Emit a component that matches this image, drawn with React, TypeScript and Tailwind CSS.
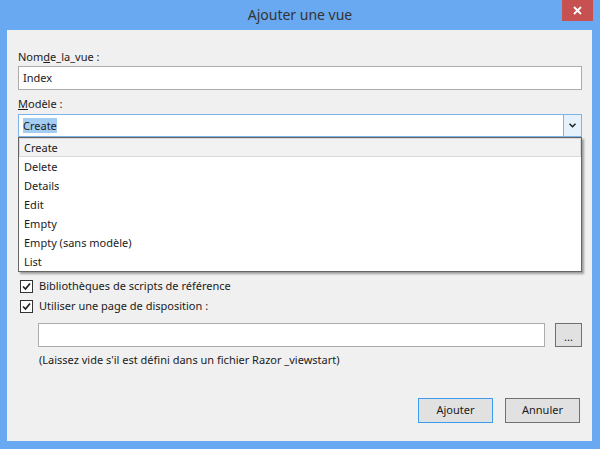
import React from 'react'

const font = { fontFamily: '"Noto Sans", "Open Sans", sans-serif' }

// Small check mark for the Windows 8 style checkbox
const CheckBox = () => (
  <div className="w-[13px] h-[13px] border border-[#333333] bg-white flex items-center justify-center shrink-0">
    <svg width="9" height="9" viewBox="0 0 9 9">
      <path d="M1 4.5 L3.5 7 L8 1.5" fill="none" stroke="#212121" strokeWidth="1.7" />
    </svg>
  </div>
)

const templates = ['Create', 'Delete', 'Details', 'Edit', 'Empty', 'Empty (sans modèle)', 'List']

export default function App() {
  return (
    <div className="w-[600px] h-[449px] bg-[#69a9f1] flex flex-col text-[11px] text-[#1b1b1b]" style={font}>
      {/* Title bar */}
      <div className="relative h-[30px] flex items-center justify-center shrink-0">
        <span className="text-[14px] text-[#333333] leading-none">Ajouter une vue</span>
        <div className="absolute right-[7px] top-0 w-[31px] h-[21px] bg-[#c75050] flex items-center justify-center">
          <svg width="9" height="9" viewBox="0 0 9 9">
            <path d="M1 1 L8 8 M8 1 L1 8" stroke="white" strokeWidth="1.8" />
          </svg>
        </div>
      </div>

      {/* Dialog body */}
      <div className="relative flex-1 ml-[7px] mr-[8px] mb-[8px] bg-[#f0f0f0] flex flex-col pl-[11px] pr-[10px] pt-[18px]">
        <div className="h-[17px] leading-[17px]">
          Nom<span className="underline">d</span>e_la_vue :
        </div>
        <div className="h-[24px] border border-[#acacac] bg-white flex items-center pl-[4px] mt-[1px]">Index</div>

        <div className="h-[17px] leading-[17px] mt-[5px]">
          <span className="underline">M</span>odèle :
        </div>
        <div className="h-[23px] border border-[#7eb4ea] bg-white flex mt-[2px]">
          <div className="flex-1 flex items-center pl-[4px]">
            <span className="bg-[#a3cdf2] leading-[15px]">Create</span>
          </div>
          <div className="w-[18px] border-l border-[#7eb4ea] bg-[#e5f1fb] flex items-center justify-center">
            <svg width="7" height="5" viewBox="0 0 7 5">
              <path d="M0.5 0.8 L3.5 3.8 L6.5 0.8" fill="none" stroke="#202020" strokeWidth="1.5" />
            </svg>
          </div>
        </div>

        {/* Space covered by the open dropdown */}
        <div className="h-[143px]" />

        <div className="flex items-center gap-[6px] pl-[2px] h-[13px]">
          <CheckBox />
          <span>Bibliothèques de scripts de référence</span>
        </div>
        <div className="flex items-center gap-[6px] pl-[2px] h-[13px] mt-[7px]">
          <CheckBox />
          <span>Utiliser une page de disposition :</span>
        </div>

        <div className="flex items-center mt-[10px] pl-[20px]">
          <div className="h-[24px] flex-1 border border-[#acacac] bg-white" />
          <div className="ml-[10px] w-[27px] h-[24px] border border-[#707070] bg-[#e1e1e1] flex items-end justify-center pb-[4px] leading-none text-[11px]">
            ...
          </div>
        </div>
        <div className="pl-[21px] mt-[5px] h-[16px] leading-[16px]">
          (Laissez vide s'il est défini dans un fichier Razor _viewstart)
        </div>

        <div className="flex-1" />
        <div className="flex justify-end gap-[12px] pr-[2px] mb-[18px]">
          <div className="w-[75px] h-[25px] border border-[#3c9df0] bg-[#e1e1e1] flex items-center justify-center">Ajouter</div>
          <div className="w-[75px] h-[25px] border border-[#707070] bg-[#e1e1e1] flex items-center justify-center">Annuler</div>
        </div>

        {/* Open dropdown list of the Modèle combobox */}
        <div className="absolute left-[11px] right-[10px] top-[107px] bg-white border border-[#646464] shadow-[2px_2px_2px_rgba(0,0,0,0.35)] flex flex-col">
          {templates.map((t, i) => (
            <div
              key={t}
              className={`h-[19px] leading-[17px] ${i === 0 ? 'bg-[#f2f2f2] border border-[#dadada] pl-[4px]' : 'border border-transparent pl-[4px]'}`}
            >
              {t}
            </div>
          ))}
        </div>
      </div>
    </div>
  )
}
